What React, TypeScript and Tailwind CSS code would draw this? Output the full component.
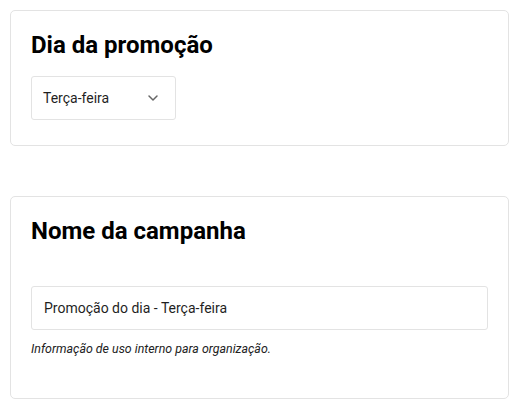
import { ChevronDown } from "lucide-react";

export default function App() {
  return (
    <div className="min-h-[410px] bg-white px-[10px] pt-[10px] font-['Roboto',sans-serif] text-[#1f1f1f]">
      <section className="w-[499px] rounded-[5px] border border-[#e3e3e3] px-5 pt-5 pb-[25px]">
        <h2 className="text-[24px] leading-[28px] font-bold text-black">Dia da promoção</h2>
        <div className="mt-[17px] flex h-[44px] w-[145px] items-center justify-between rounded-[3px] border border-[#e3e3e3] pl-[11px] pr-[14px] text-sm">
          <span>Terça-feira</span>
          <ChevronDown className="h-4 w-4 text-[#666]" strokeWidth={2.25} />
        </div>
      </section>

      <section className="mt-[50px] w-[499px] rounded-[5px] border border-[#e3e3e3] px-5 pt-5 pb-[41px]">
        <h2 className="text-[24px] leading-[28px] font-bold text-black">Nome da campanha</h2>
        <div className="mt-[41px] flex h-[44px] items-center rounded-[3px] border border-[#e3e3e3] px-3 text-sm">
          Promoção do dia - Terça-feira
        </div>
        <p className="mt-[11px] text-[12.4px] leading-4 italic text-[#222]">
          Informação de uso interno para organização.
        </p>
      </section>
    </div>
  );
}
